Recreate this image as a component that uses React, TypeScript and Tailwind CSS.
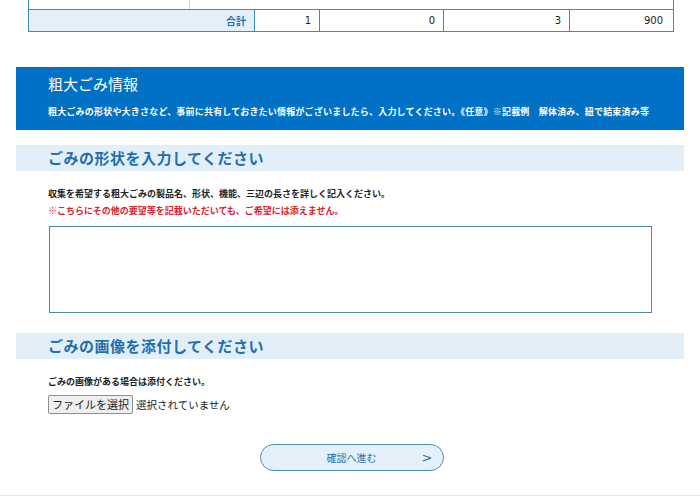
import React from "react";

const font = { fontFamily: '"Noto Sans CJK JP", "Noto Sans", sans-serif' };

export default function App() {
  const totals = ["1", "0", "3", "900"];
  return (
    <div className="w-[700px] h-[503px] overflow-hidden bg-white text-[#222]" style={font}>
      {/* 合計行（表の末尾） */}
      <div className="ml-[28px] w-[646px]">
        <div className="flex h-[9px] border-x border-[#3d8db3]">
          <div className="w-[161px] border-r border-[#cfcfcf]" />
          <div className="flex-1" />
        </div>
        <div className="flex h-[23px] border border-[#3d8db3] text-[10px]">
          <div className="w-[226px] bg-[#e3eff9] border-r border-[#3d8db3] flex items-center justify-end pr-[8px] font-bold text-[#1f6fae]">
            合計
          </div>
          <div className="w-[65px] border-r border-[#3d8db3] flex items-center justify-end pr-[8px]" style={{ fontFamily: '"DejaVu Sans", sans-serif' }}>
            {totals[0]}
          </div>
          <div className="w-[124px] border-r border-[#3d8db3] flex items-center justify-end pr-[8px]" style={{ fontFamily: '"DejaVu Sans", sans-serif' }}>
            {totals[1]}
          </div>
          <div className="w-[126px] border-r border-[#3d8db3] flex items-center justify-end pr-[8px]" style={{ fontFamily: '"DejaVu Sans", sans-serif' }}>
            {totals[2]}
          </div>
          <div className="flex-1 flex items-center justify-end pr-[10px]" style={{ fontFamily: '"DejaVu Sans", sans-serif' }}>
            {totals[3]}
          </div>
        </div>
      </div>

      <div className="mx-[16px] mt-[35px]">
        {/* 見出しバナー */}
        <div className="bg-[#0071c5] h-[63px] px-[32px] pt-[5px] text-white">
          <div className="text-[15px] leading-[24px]">粗大ごみ情報</div>
          <div className="mt-[9px] text-[9px] font-bold leading-[14px] tracking-[0.2px] whitespace-nowrap">
            粗大ごみの形状や大きさなど、事前に共有しておきたい情報がございましたら、入力してください。《任意》※記載例　解体済み、紐で結束済み等
          </div>
        </div>

        {/* 形状 */}
        <div className="mt-[15px] bg-[#e2eff9] h-[26px] px-[32px] flex items-center">
          <h2 className="text-[15px] font-bold text-[#1f6fae] tracking-[0.5px]">ごみの形状を入力してください</h2>
        </div>
        <div className="px-[32px] pt-[14px]">
          <p className="text-[9px] font-bold leading-[17px]">収集を希望する粗大ごみの製品名、形状、機能、三辺の長さを詳しく記入ください。</p>
          <p className="text-[9px] font-bold leading-[17px] text-[#e0202a]">※こちらにその他の要望等を記載いただいても、ご希望には添えません。</p>
          <textarea className="mt-[7px] ml-[1px] block w-[603px] h-[87px] border border-[#4e8d94] resize-none outline-none" />
        </div>

        {/* 画像 */}
        <div className="mt-[20px] bg-[#e2eff9] h-[26px] px-[32px] flex items-center">
          <h2 className="text-[15px] font-bold text-[#1f6fae] tracking-[0.5px]">ごみの画像を添付してください</h2>
        </div>
        <div className="px-[32px] pt-[14px]">
          <p className="text-[9px] font-bold leading-[17px]">ごみの画像がある場合は添付ください。</p>
          <div className="mt-[5px] flex items-center text-[10.5px]">
            <span className="h-[19px] px-[3px] border border-[#8f8f8f] bg-[#efefef] rounded-[2px] flex items-center text-[11px]">ファイルを選択</span>
            <span className="ml-[3px]">選択されていません</span>
          </div>
        </div>

        <div className="mt-[30px] flex justify-center">
          <button className="ml-[3px] w-[184px] h-[27px] rounded-full border border-[#4a8fb3] bg-[#e4f1fb] text-[#1f6fae] text-[10px] relative flex items-center justify-center">
            確認へ進む
            <span className="absolute right-[10px] top-[3px] text-[13px]" style={{ fontFamily: '"DejaVu Sans", sans-serif' }}>&gt;</span>
          </button>
        </div>
      </div>
      <div className="mt-[24px] border-t border-[#e8e8e8]" />
    </div>
  );
}
